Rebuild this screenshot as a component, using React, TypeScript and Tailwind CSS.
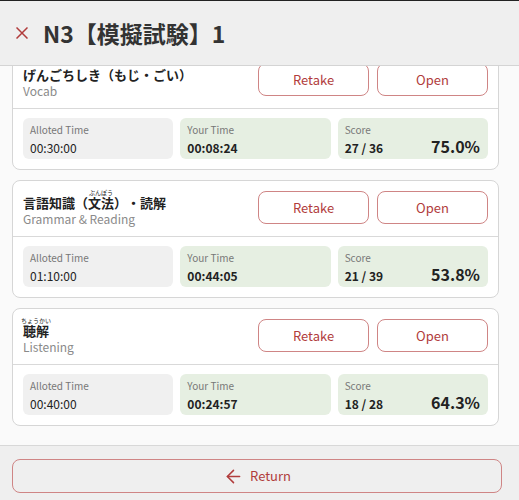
import { ArrowLeft } from "lucide-react"

type Section = {
  id: number
  title: React.ReactNode
  subtitle: string
  alloted: string
  yours: string
  score: string
  percent: string
}

function Furi({ base, ruby }: { base: string; ruby: string }) {
  return (
    <span className="relative inline-block">
      <span className="absolute left-1/2 bottom-full -translate-x-1/2 -mb-[1px] whitespace-nowrap text-[6px] leading-none font-normal">
        {ruby}
      </span>
      {base}
    </span>
  )
}

const sections: Section[] = [
  {
    id: 1,
    title: "げんごちしき（もじ・ごい）",
    subtitle: "Vocab",
    alloted: "00:30:00",
    yours: "00:08:24",
    score: "27 / 36",
    percent: "75.0%",
  },
  {
    id: 2,
    title: (
      <>
        言語知識（<Furi base="文法" ruby="ぶんぽう" />）・読解
      </>
    ),
    subtitle: "Grammar & Reading",
    alloted: "01:10:00",
    yours: "00:44:05",
    score: "21 / 39",
    percent: "53.8%",
  },
  {
    id: 3,
    title: <Furi base="聴解" ruby="ちょうかい" />,
    subtitle: "Listening",
    alloted: "00:40:00",
    yours: "00:24:57",
    score: "18 / 28",
    percent: "64.3%",
  },
]

function SectionCard({ s }: { s: Section }) {
  return (
    <div className="h-[118px] bg-white border border-[#d6d6d6] rounded-lg flex flex-col shrink-0">
      <div className="h-[55px] flex justify-between px-[10px]">
        <div className="pt-[14px]">
          <div className="text-[13px] leading-[16px] font-semibold text-[#222]">{s.title}</div>
          <div className="text-[12px] leading-[16px] text-[#8a8a8a]">{s.subtitle}</div>
        </div>
        <div className="flex gap-2 pt-[10px]">
          <button className="w-[111px] h-[33px] rounded-lg border border-[#cf8585] text-[13px] text-[#b13c3c]">
            Retake
          </button>
          <button className="w-[111px] h-[33px] rounded-lg border border-[#cf8585] text-[13px] text-[#b13c3c]">
            Open
          </button>
        </div>
      </div>
      <div className="border-t border-[#d9d9d9] grid grid-cols-3 gap-[7px] px-[10px] pt-[9px]">
        <div className="h-[41px] rounded-md bg-[#f0f0f0] px-[7px] pt-[6px]">
          <div className="text-[10px] leading-[12px] text-[#777]">Alloted Time</div>
          <div className="text-[12px] leading-[18px] mt-[3px] text-[#222]">{s.alloted}</div>
        </div>
        <div className="h-[41px] rounded-md bg-[#e6efe2] px-[7px] pt-[6px]">
          <div className="text-[10px] leading-[12px] text-[#777]">Your Time</div>
          <div className="text-[12px] leading-[18px] mt-[3px] font-bold text-[#222]">{s.yours}</div>
        </div>
        <div className="h-[41px] rounded-md bg-[#e6efe2] pl-[7px] pr-[8px] pt-[6px]">
          <div className="text-[10px] leading-[12px] text-[#777]">Score</div>
          <div className="flex justify-between items-baseline">
            <span className="text-[12px] leading-[18px] mt-[3px] font-bold text-[#222]">{s.score}</span>
            <span className="text-[16px] leading-[20px] font-bold text-[#222]">{s.percent}</span>
          </div>
        </div>
      </div>
    </div>
  )
}

export default function App() {
  return (
    <div className="h-[500px] w-[519px] flex flex-col bg-[#fafafa] font-['Noto_Sans_CJK_JP',sans-serif] [text-spacing-trim:space-all] overflow-hidden">
      <header className="relative z-10 h-[66px] shrink-0 border-t border-b border-t-[#222] border-b-[#d4d4d4] bg-[#efefef] flex items-center pl-4 gap-[15px]">
        <svg width="12" height="12" viewBox="0 0 12 12" className="text-[#b13c3c]">
          <path d="M0.5 0.5 L11.5 11.5 M11.5 0.5 L0.5 11.5" stroke="currentColor" strokeWidth="1.5" />
        </svg>
        <h1 className="text-[23px] font-bold text-[#333] leading-none">N3【模擬試験】1</h1>
      </header>

      <main className="flex-1 overflow-hidden">
        <div className="-mt-[14px] pl-3 pr-5 flex flex-col gap-[10px]">
          {sections.map((s) => (
            <SectionCard key={s.id} s={s} />
          ))}
        </div>
      </main>

      <footer className="h-[55px] shrink-0 border-t border-[#d8d8d8] bg-[#efefef] pl-3 pr-[17px] pt-[13px]">
        <button className="w-full h-[34px] rounded-lg border border-[#cf8585] flex items-center justify-center gap-[6px] text-[13px] text-[#b13c3c]">
          <ArrowLeft size={21} strokeWidth={1.75} />
          Return
        </button>
      </footer>
    </div>
  )
}
